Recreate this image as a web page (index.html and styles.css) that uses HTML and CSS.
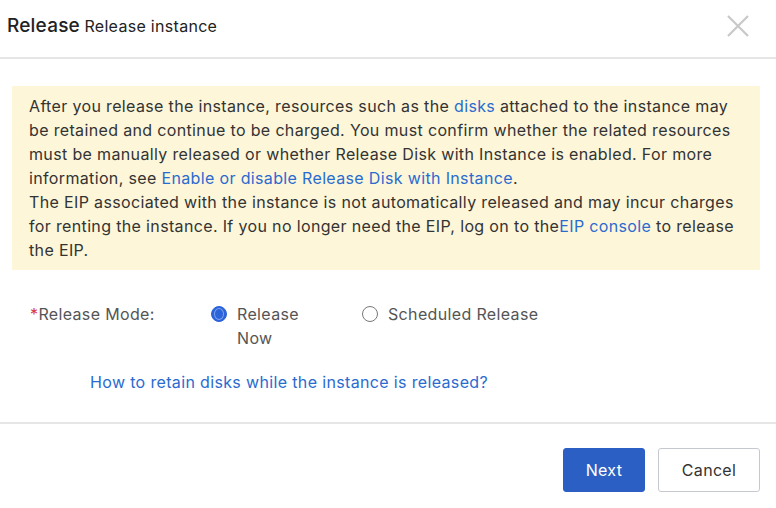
FILE: index.html
```html
<!DOCTYPE html>
<html lang="en">
<head>
<meta charset="utf-8">
<link rel="stylesheet" href="styles.css">
</head>
<body>
<div class="dialog">
  <div class="header">
    <div class="title"><span class="title-main">Release</span> <span class="title-sub">Release instance</span></div>
    <svg class="close" width="24" height="24" viewBox="0 0 24 24"><path d="M2 2L22 22M22 2L2 22" stroke="#c8c8c8" stroke-width="2.2" fill="none"/></svg>
  </div>
  <div class="body">
    <div class="alert">After you release the instance, resources such as the <a class="link">disks</a> attached to the instance may be retained and continue to be charged. You must confirm whether the related resources must be manually released or whether Release Disk with Instance is enabled. For more information, see <a class="link">Enable or disable Release Disk with Instance</a>.<br>The EIP associated with the instance is not automatically released and may incur charges for renting the instance. If you no longer need the EIP, log on to the<a class="link">EIP console</a> to release the EIP.</div>
    <div class="form-row">
      <div class="label"><span class="req">*</span>Release Mode:</div>
      <div class="radios">
        <div class="radio-item first">
          <span class="radio checked"><span class="dot"></span></span>
          <span class="radio-text">Release Now</span>
        </div>
        <div class="radio-item">
          <span class="radio"></span>
          <span class="radio-text">Scheduled Release</span>
        </div>
      </div>
    </div>
    <div class="help"><a class="link">How to retain disks while the instance is released?</a></div>
  </div>
  <div class="footer">
    <button class="btn primary">Next</button>
    <button class="btn">Cancel</button>
  </div>
</div>
</body>
</html>
```
FILE: styles.css
```css
html, body { margin: 0; padding: 0; background: #fff; }
body { font-family: Inter, "Liberation Sans", Arial, sans-serif; color: #333; width: 776px; height: 508px; overflow: hidden; }
.dialog { display: flex; flex-direction: column; }
.header { height: 57px; display: flex; align-items: center; justify-content: space-between; padding: 0 26px 0 7px; border-bottom: 2px solid #e6e6e6; }
.title { color: #222; margin-top: -7px; }
.title-main { font-size: 19px; font-weight: 500; letter-spacing: 0.2px; }
.title-sub { font-size: 16px; letter-spacing: 0.3px; }
.close { display: block; margin-top: -6px; }
.body { padding: 27px 16px 0 12px; }
.alert { background: #fdf6d9; padding: 8px 18px 8px 17px; font-size: 16px; line-height: 24px; color: #333; letter-spacing: 0.35px; }
.link { color: #2a6bd0; text-decoration: none; }
.form-row { display: flex; align-items: flex-start; margin-top: 32px; padding-left: 18px; font-size: 16px; line-height: 24px; color: #555; letter-spacing: 0.35px; }
.label { width: 181px; }
.req { color: #d9363e; }
.radios { display: flex; }
.radio-item { display: flex; align-items: flex-start; }
.radio-item.first { width: 151px; }
.radio-item.first .radio-text { width: 72px; }
.radio { width: 16px; height: 16px; box-sizing: border-box; border: 1.5px solid #777; border-radius: 50%; margin: 4px 10px 0 0; display: flex; align-items: center; justify-content: center; flex: none; }
.radio.checked { background: #2b63d9; border-color: #2b63d9; }
.dot { width: 8px; height: 10px; border-radius: 50%; border: 1px solid #7fa2ef; }
.help { margin-top: 20px; padding-left: 78px; font-size: 16px; line-height: 24px; letter-spacing: 0.35px; }
.footer { margin-top: 28px; border-top: 2px solid #e6e6e6; display: flex; justify-content: flex-end; gap: 13px; padding: 24px 16px 0 0; }
.btn { font-family: inherit; font-size: 16px; height: 44px; border-radius: 3px; padding: 0; background: #fff; border: 1.5px solid #c5c9cf; color: #333; width: 102px; letter-spacing: 0.3px; }
.btn.primary { background: #2b5fc4; border-color: #2b5fc4; color: #fff; width: 82px; }
```
